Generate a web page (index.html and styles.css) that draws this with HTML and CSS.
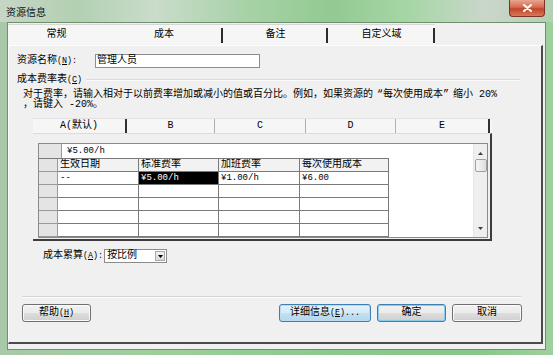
FILE: index.html
```html
<!DOCTYPE html>
<html lang="zh-CN">
<head>
    <meta charset="UTF-8">
    <title>资源信息</title>
    <link rel="stylesheet" href="styles.css">
</head>
<body>
    <div class="window">
        <div class="titlebar">
            <span class="title">资源信息</span>
            <div class="close">
                <svg width="9" height="8" viewBox="0 0 9 8"><path d="M1 1 L8 7 M8 1 L1 7" stroke="#fff" stroke-width="2" stroke-linecap="round"/></svg>
            </div>
        </div>

        <div class="client">
            <div class="tabs">
                <div class="tab tab-general">常规</div>
                <div class="tab tab-cost sep">成本</div>
                <div class="tab tab-notes sep">备注</div>
                <div class="tab tab-custom sep">自定义域</div>
            </div>

            <div class="panel">
                <div class="name-row">
                    <label class="name-label">资源名称<span class="lat">(<u>N</u>):</span></label>
                    <div class="textbox">管理人员</div>
                </div>

                <div class="group-title">
                    <span>成本费率表<span class="lat">(<u>C</u>)</span></span>
                    <div class="group-line"></div>
                </div>

                <p class="hint">对于费率，请输入相对于以前费率增加或减小的值或百分比。例如，如果资源的<span class="q ql">“</span>每次使用成本<span class="q qr">”</span>缩小 20%<br>，请键入 -20%。</p>

                <div class="rate-tabs">
                    <div class="rtab rtab-a">A(默认)</div>
                    <div class="rtab rtab-b">B</div>
                    <div class="rtab rtab-c">C</div>
                    <div class="rtab rtab-d">D</div>
                    <div class="rtab rtab-e">E</div>
                </div>

                <div class="rate-panel">
                    <div class="grid">
                        <div class="grid-main">
                            <div class="editbar">
                                <div class="edit-head"></div>
                                <div class="edit-cell num">¥5.00/h</div>
                            </div>
                            <div class="table">
                                <div class="cell rh"></div>
                                <div class="cell ch">生效日期</div>
                                <div class="cell ch">标准费率</div>
                                <div class="cell ch">加班费率</div>
                                <div class="cell ch">每次使用成本</div>

                                <div class="cell rh"></div>
                                <div class="cell num">--</div>
                                <div class="cell num selected">¥5.00/h</div>
                                <div class="cell num">¥1.00/h</div>
                                <div class="cell num">¥6.00</div>

                                <div class="cell rh"></div><div class="cell"></div><div class="cell"></div><div class="cell"></div><div class="cell"></div>
                                <div class="cell rh"></div><div class="cell"></div><div class="cell"></div><div class="cell"></div><div class="cell"></div>
                                <div class="cell rh"></div><div class="cell"></div><div class="cell"></div><div class="cell"></div><div class="cell"></div>
                                <div class="cell rh"></div><div class="cell"></div><div class="cell"></div><div class="cell"></div><div class="cell"></div>
                            </div>
                        </div>
                        <div class="scrollbar">
                            <div class="sb-btn sb-up">
                                <svg width="5" height="3" viewBox="0 0 5 3"><path d="M0 3 L2.5 0 L5 3 Z" fill="#404040"/></svg>
                            </div>
                            <div class="sb-thumb"></div>
                            <div class="sb-track"></div>
                            <div class="sb-btn sb-down">
                                <svg width="5" height="3" viewBox="0 0 5 3"><path d="M0 0 L2.5 3 L5 0 Z" fill="#404040"/></svg>
                            </div>
                        </div>
                    </div>
                </div>

                <div class="accrue-row">
                    <label class="accrue-label">成本累算<span class="lat">(<u>A</u>):</span></label>
                    <div class="combo">
                        <span class="combo-text">按比例</span>
                        <div class="combo-btn">
                            <svg width="5" height="3" viewBox="0 0 5 3"><path d="M0 0 L2.5 3 L5 0 Z" fill="#000"/></svg>
                        </div>
                    </div>
                </div>

                <div class="separator"></div>

                <div class="buttons">
                    <div class="btn btn-help">帮助<span class="lat">(<u>H</u>)</span></div>
                    <div class="btn-group">
                        <div class="btn btn-details">详细信息<span class="lat">(<u>E</u>)...</span></div>
                        <div class="btn btn-ok">确定</div>
                        <div class="btn btn-cancel">取消</div>
                    </div>
                </div>
            </div>
        </div>
    </div>
</body>
</html>
```

FILE: styles.css
```css
* {
    box-sizing: border-box;
}

body {
    margin: 0;
    width: 553px;
    height: 355px;
    overflow: hidden;
    font-family: "Liberation Mono", "Noto Sans CJK SC", monospace;
    font-size: 10px;
    color: #000;
}

u {
    text-decoration: underline;
}

/* latin runs are half the width of a CJK glyph */
.lat {
    font-size: 8.4px;
}

.window {
    width: 553px;
    height: 355px;
    display: flex;
    flex-direction: column;
    background: linear-gradient(90deg, #a9c8a9 0%, #9ccf9c 30%, #8cc88c 60%, #86c686 85%, #9fd09f 100%);
}

/* title bar */
.titlebar {
    height: 22px;
    flex-shrink: 0;
    display: flex;
    justify-content: space-between;
    align-items: flex-start;
    background: linear-gradient(90deg, #c6d6c6 0%, #b2d0b2 14%, #cadccb 28%, #a8d2a8 44%, #92ca92 60%, #a6d6a6 74%, #cbd6cb 88%, #b2d0b2 100%);
}

.title {
    font-family: "Noto Sans CJK SC", sans-serif;
    font-size: 10px;
    line-height: 12px;
    margin: 6px 0 0 6px;
    color: #101010;
}

.close {
    width: 36px;
    height: 17px;
    margin-right: 8px;
    border: 1px solid #7a3326;
    border-top: none;
    border-radius: 0 0 4px 4px;
    background: linear-gradient(#e9a58f 0%, #d46c52 45%, #c2452c 55%, #d9785a 100%);
    display: flex;
    align-items: center;
    justify-content: center;
}

/* client area */
.client {
    flex: 1;
    margin: 0 7px 5px 7px;
    background: #f0f0f0;
    border: 1px solid #6f8f6f;
    padding: 1px 2px 5px 0;
    display: flex;
    flex-direction: column;
}

.tabs {
    display: flex;
    height: 21px;
    flex-shrink: 0;
}

.tab {
    height: 21px;
    padding-top: 4px;
    text-align: center;
    line-height: 12px;
    background: #f6f6f6;
    border-top: 1px solid #d6d6d6;
}

.tab.sep {
    background: linear-gradient(#2c2c2c, #2c2c2c) right 3px / 2px 15px no-repeat, #f6f6f6;
}

.tab-general { width: 97px; }
.tab-cost { width: 118px; background-color: #f8f8f8; }
.tab-notes { width: 105px; }
.tab-custom { width: 107px; }

.panel {
    flex: 1;
    border-top: 1px solid #fdfdfd;
    border-left: 1px solid #fdfdfd;
    border-right: 2px solid #4a4a4a;
    border-bottom: 2px solid #4a4a4a;
    display: flex;
    flex-direction: column;
}

.name-row {
    display: flex;
    align-items: center;
    margin: 8px 0 0 8px;
    height: 14px;
}

.name-label {
    width: 78px;
    line-height: 12px;
    white-space: nowrap;
}

.textbox {
    width: 165px;
    height: 14px;
    border: 1px solid #8c8c8c;
    background: #fff;
    padding-left: 1px;
    line-height: 12px;
}

.group-title {
    display: flex;
    align-items: center;
    margin: 6px 21px 0 8px;
    height: 11px;
    line-height: 11px;
}

.group-line {
    flex: 1;
    margin-left: 4px;
    border-top: 1px solid #dadada;
    border-bottom: 1px solid #fafafa;
}

.hint {
    margin: 5px 0 0 14px;
    line-height: 10px;
    height: 20px;
    white-space: nowrap;
}

.q {
    display: inline-block;
    width: 10px;
}

.ql { text-align: right; }
.qr { text-align: left; }

/* rate table tabs */
.rate-tabs {
    display: flex;
    margin: 8px 0 0 24px;
    width: 459px;
    height: 15px;
    background: #f6f6f6;
    border-top: 1px solid #e2e2e2;
}

.rtab {
    text-align: center;
    line-height: 13px;
    border-right: 1px solid #b0b0b0;
}

.rtab-a { width: 94px; border-right: 2px solid #303030; }
.rtab-b { width: 88px; }
.rtab-c { width: 91px; }
.rtab-d { width: 90px; }
.rtab-e { width: 94px; border-right: 2px solid #303030; }

.rate-panel {
    margin-left: 24px;
    width: 459px;
    height: 108px;
    padding: 9px 0 0 5px;
    border-top: 1px solid #dcdcdc;
    border-right: 2px solid #3c3c3c;
    border-bottom: 2px solid #3c3c3c;
}

.grid {
    width: 450px;
    display: flex;
    border: 1px solid #8a8a8a;
    background: #fff;
}

.grid-main {
    flex: 1;
}

.editbar {
    display: flex;
    height: 14px;
}

.edit-head {
    width: 23px;
    background: #e4e4e4;
    border-right: 1px solid #9a9a9a;
}

.edit-cell {
    flex: 1;
    padding-left: 5px;
    line-height: 14px;
}

.num {
    font-size: 9px;
}

.table {
    display: grid;
    grid-template-columns: 19px 81px 80px 81px 89px;
    grid-auto-rows: 13px;
    width: 350px;
    border-top: 1px solid #7a7a7a;
}

.cell {
    border-right: 1px solid #7a7a7a;
    border-bottom: 1px solid #7a7a7a;
    padding-left: 2px;
    line-height: 12px;
    white-space: nowrap;
    overflow: hidden;
}

.cell.rh {
    background: #e4e4e4;
    border-color: #9a9a9a;
}

.cell.ch {
    background: #f2f2f2;
}

.cell.selected {
    background: #000;
    color: #fff;
}

.scrollbar {
    width: 14px;
    background: #efefef;
    border-left: 1px solid #e6e6e6;
    display: flex;
    flex-direction: column;
    align-items: center;
}

.sb-btn {
    height: 15px;
    display: flex;
    align-items: center;
    justify-content: center;
}

.sb-up { padding-top: 3px; }
.sb-down { padding-bottom: 2px; }

.sb-thumb {
    width: 12px;
    height: 13px;
    border: 1px solid #a0a0a0;
    border-radius: 2px;
    background: linear-gradient(90deg, #f6f6f6, #dedede);
}

.sb-track {
    flex: 1;
}

/* cost accrual */
.accrue-row {
    display: flex;
    align-items: center;
    margin: 8px 0 0 34px;
    height: 14px;
}

.accrue-label {
    line-height: 12px;
    margin-right: 1px;
    white-space: nowrap;
}

.combo {
    display: flex;
    width: 63px;
    height: 14px;
    border: 1px solid #8c8c8c;
    background: #fff;
}

.combo-text {
    flex: 1;
    padding-left: 2px;
    line-height: 12px;
}

.combo-btn {
    width: 10px;
    margin: 1px;
    background: linear-gradient(#f2f2f2, #d8d8d8);
    border: 1px solid #a8a8a8;
    display: flex;
    align-items: center;
    justify-content: center;
}

.separator {
    margin: 33px 0 0 13px;
    width: 499px;
    border-top: 1px solid #d4d4d4;
    border-bottom: 1px solid #fdfdfd;
}

/* buttons */
.buttons {
    display: flex;
    justify-content: space-between;
    margin: 6px 19px 0 13px;
}

.btn-group {
    display: flex;
    gap: 6px;
}

.btn {
    height: 18px;
    border: 1px solid #707070;
    border-radius: 3px;
    background: linear-gradient(#f2f2f2 0%, #ebebeb 48%, #dddddd 52%, #cfcfcf 100%);
    box-shadow: inset 0 0 0 1px #fbfbfb;
    text-align: center;
    line-height: 16px;
    white-space: nowrap;
}

.btn-help { width: 69px; }

.btn-details {
    width: 92px;
    border-color: #3c7fb1;
    background: linear-gradient(#e6f2fa 0%, #d6eaf7 48%, #c4e0f2 52%, #b4d6ee 100%);
    box-shadow: inset 0 0 0 1px #b8dcf2;
}

.btn-ok {
    width: 69px;
    border-color: #3c7fb1;
    box-shadow: inset 0 0 0 1px #8ccbec;
}

.btn-cancel { width: 70px; }
```
